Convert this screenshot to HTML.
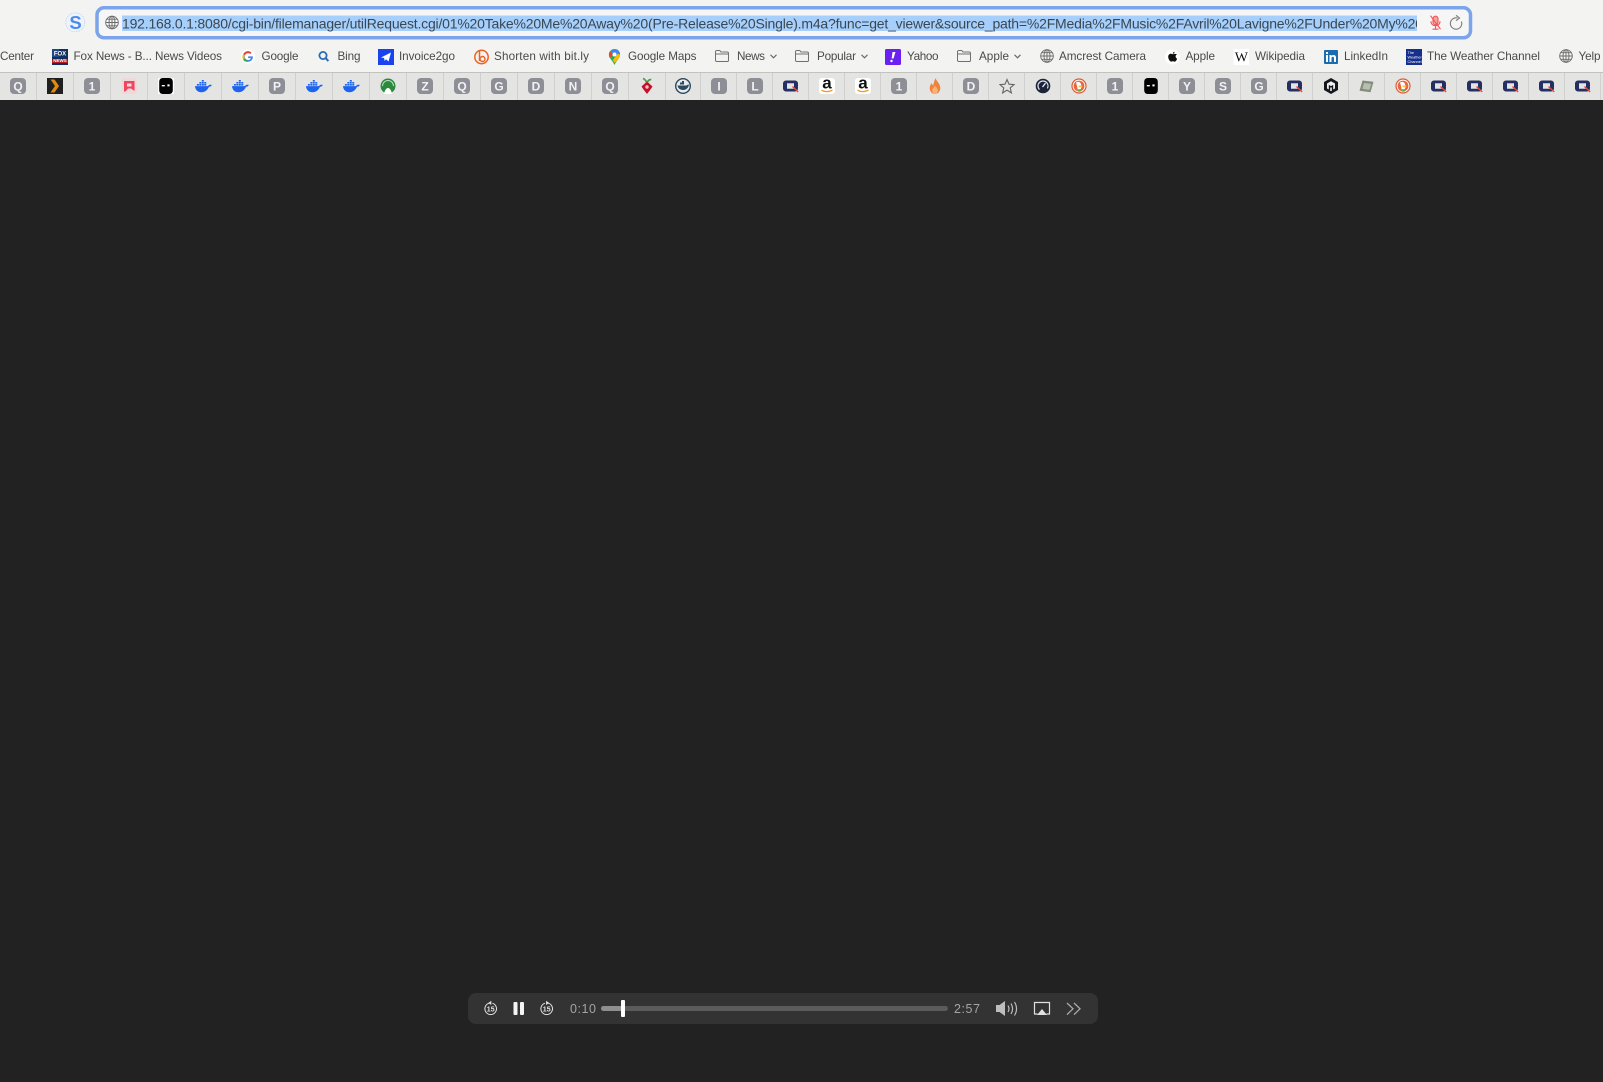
<!DOCTYPE html>
<html lang="en">
<head>
<meta charset="utf-8">
<title>Viewer</title>
<style>
html,body{margin:0;padding:0;background:#222;width:1603px;height:1082px;overflow:hidden}
svg{display:block;position:absolute;left:0;top:0}
text{font-family:"Liberation Sans",Arial,sans-serif}
.b{font-size:11.7px;fill:#4a4a4a}
.t{font-size:12px;font-weight:bold;fill:#f2f2f4;text-anchor:middle}
.r{fill:#8e8e97}
.s{fill:#d0d0cf}
</style>
</head>
<body>
<svg width="1603" height="1082" viewBox="0 0 1603 1082" xmlns="http://www.w3.org/2000/svg">
<defs>
<clipPath id="urlclip"><rect x="122" y="10" width="1295" height="26"/></clipPath>
<symbol id="docker" viewBox="0 0 18 13" overflow="visible">
<path fill="#1d63ed" d="M0 6.500H13c.6 0 1-.3 1.400-.8.600-.7 1.800-.9 3.400-.5-.5 1.400-1.600 2-3 2C13.300 10.800 10.500 13 7 13 3 13 .3 10.500 0 6.500z"/>
<path fill="#1d63ed" d="M2 4.200h2.100V6H2zM4.600 4.200h2.100V6H4.600zM7.200 4.200h2.100V6H7.200zM9.800 4.200h2.100V6H9.800zM4.600 2.100h2.100v1.700H4.600zM7.200 2.100h2.100v1.700H7.200zM9.800 2.100h2.100v1.700H9.800zM7.200 0h2.100v1.700H7.200z"/>
</symbol>
<symbol id="qnap" viewBox="0 0 15 11" overflow="visible">
<path fill="#252f62" fill-rule="evenodd" d="M3 0h9a3 3 0 0 1 3 3v5a3 3 0 0 1-3 3H3a3 3 0 0 1-3-3V3a3 3 0 0 1 3-3zM4 2.700v5.600h7V2.700z"/>
<path stroke="#e8443a" stroke-width="1.400" d="M9.500 6l5.700 5.400"/>
</symbol>
<symbol id="globe" viewBox="0 0 14 14" overflow="visible">
<g fill="none" stroke="#6a6a6a" stroke-width=".9">
<circle cx="7" cy="7" r="6.300"/><ellipse cx="7" cy="7" rx="3" ry="6.300"/>
<path d="M7 .7v12.600M.7 7h12.600M1.700 3.700h10.600M1.700 10.300h10.600"/>
</g>
</symbol>
<symbol id="folder" viewBox="0 0 14 12" overflow="visible">
<path fill="none" stroke="#707070" stroke-width="1" d="M.5 2.500V1.800A1.300 1.300 0 0 1 1.800.5h3l1.200 1.500h6.200a1.300 1.300 0 0 1 1.300 1.300v6.900a1.300 1.300 0 0 1-1.300 1.300H1.800A1.300 1.300 0 0 1 .5 10.200V2.500zM.5 4h13"/>
</symbol>
<symbol id="mask" viewBox="0 0 16 16" overflow="visible">
<path fill="#000" d="M5 0h6c2.500 0 3.800 1.500 3.800 4v8c0 2.500-1.300 4-3.800 4H5c-2.500 0-3.800-1.500-3.800-4V4C1.200 1.500 2.500 0 5 0z"/>
<rect x="3.800" y="7" width="3" height="1.400" fill="#fff"/>
<rect x="9.400" y="6.400" width="2.200" height="2" fill="#fff"/>
</symbol>
<symbol id="amz" viewBox="0 0 16 16" overflow="visible">
<rect width="16" height="16" rx="3" fill="#fff"/>
<text x="8" y="10.700" font-size="17" font-weight="bold" fill="#111" text-anchor="middle">a</text>
<path d="M2.500 12c3 2.200 7.500 2.200 11 0" fill="none" stroke="#f29a1f" stroke-width="1.300"/>
</symbol>
<symbol id="duck" viewBox="0 0 16 16" overflow="visible">
<circle cx="8" cy="8" r="7.600" fill="#de5833"/>
<circle cx="8" cy="8" r="6.400" fill="#fff"/>
<circle cx="8" cy="8" r="5.400" fill="#e5673f"/>
<path fill="#fff" d="M5 4.500c2-1.300 4.500-.6 5 1.500l.5 3.500-2 3.500H7L6 8z"/>
<path fill="#f8c13a" d="M7.500 7.500h4.200l-1 1.600-3 .3z"/>
<path fill="#5bb130" d="M6.800 11.300h3.200l-.4 2.400H7.300z"/>
</symbol>
<symbol id="rew" viewBox="0 0 14 16" overflow="visible">
<path d="M5.300 3.200A5.800 5.800 0 1 0 8.700 3.200" fill="none" stroke="#e4e4e4" stroke-width="1"/>
<path fill="#e4e4e4" d="M7.600 .8v4.200L4.500 3z"/>
</symbol>
</defs>

<rect x="0" y="0" width="1603" height="72" fill="#f3f3f2"/>
<rect x="0" y="72" width="1603" height="28" fill="#e4e4e3"/>
<rect x="0" y="72" width="1603" height="1" fill="#c2c2c1"/>
<rect x="0" y="100" width="1603" height="982" fill="#222"/>

<!-- toolbar -->
<circle cx="75.300" cy="22.300" r="9.500" fill="#eef3fb" stroke="#bcd3f5" stroke-width=".8" stroke-dasharray="1.500 1"/>
<text x="75.500" y="29" font-size="18.500" font-weight="bold" fill="#4a8bf0" text-anchor="middle">S</text>
<rect x="97" y="7.800" width="1373.500" height="30" rx="7" fill="#f6f6f6" stroke="#7ba4ea" stroke-width="3.500"/>
<use href="#globe" x="105" y="15.500" width="14" height="14"/>
<rect x="122" y="15.500" width="1295" height="15.500" fill="#a6cffb"/>
<g clip-path="url(#urlclip)">
<text x="122" y="28.300" font-size="14" fill="#3a4752" textLength="1301" lengthAdjust="spacing">192.168.0.1:8080/cgi-bin/filemanager/utilRequest.cgi/01%20Take%20Me%20Away%20(Pre-Release%20Single).m4a?func=get_viewer&amp;source_path=%2FMedia%2FMusic%2FAvril%20Lavigne%2FUnder%20My%20</text>
</g>
<!-- muted mic -->
<g fill="none" stroke="#f25353" stroke-width="1.100" transform="translate(0,-.3)">
<rect x="1433" y="16.500" width="5" height="8.500" rx="2.500" fill="#f8a3a3"/>
<path d="M1431 21.500c0 3 2 4.500 4.500 4.500s4.500-1.500 4.500-4.500M1435.500 26v3M1432.500 29.500h6M1430.500 16l10 13.500"/>
</g>
<!-- reload -->
<g transform="translate(0,-.5)">
<path d="M1457.500 18.500A5.700 5.700 0 1 0 1461.400 22" fill="none" stroke="#7a7a7a" stroke-width="1.100"/>
<path d="M1456 15.800l3.500 2.700-3.500 2.700" fill="none" stroke="#7a7a7a" stroke-width="1.100"/>
</g>

<!-- bookmark labels -->
<text class="b" x="0" y="60" textLength="34">Center</text>
<text class="b" x="73.500" y="60" textLength="148.500">Fox News - B... News Videos</text>
<text class="b" x="261.500" y="60" textLength="37">Google</text>
<text class="b" x="337.500" y="60" textLength="23">Bing</text>
<text class="b" x="399" y="60" textLength="56">Invoice2go</text>
<text class="b" x="494" y="60" textLength="95">Shorten with bit.ly</text>
<text class="b" x="628" y="60" textLength="68.500">Google Maps</text>
<text class="b" x="737" y="60" textLength="28">News</text>
<text class="b" x="817" y="60" textLength="39">Popular</text>
<text class="b" x="907" y="60" textLength="31.500">Yahoo</text>
<text class="b" x="979" y="60" textLength="30">Apple</text>
<text class="b" x="1059" y="60" textLength="87">Amcrest Camera</text>
<text class="b" x="1185.500" y="60" textLength="29.500">Apple</text>
<text class="b" x="1255" y="60" textLength="50">Wikipedia</text>
<text class="b" x="1344" y="60" textLength="44">LinkedIn</text>
<text class="b" x="1427" y="60" textLength="113">The Weather Channel</text>
<text class="b" x="1578.500" y="60" textLength="22">Yelp</text>

<!-- bookmark icons -->
<g transform="translate(0,-1.500)">
<rect x="52" y="50.500" width="16" height="16" fill="#12305f"/>
<rect x="52" y="50.500" width="7" height="8" fill="#23477f"/>
<rect x="52" y="61" width="16" height="3.500" fill="#b31d22"/>
<text x="60" y="57" font-size="6" font-weight="bold" fill="#fff" text-anchor="middle">FOX</text>
<text x="60" y="63.500" font-size="4.500" font-weight="bold" fill="#fff" text-anchor="middle">NEWS</text>

<circle cx="248" cy="58" r="7" fill="#fff"/>
<path d="M252.800 57.900h-4.700v1.700h2.700c-.3 1.200-1.300 1.900-2.700 1.900a3.400 3.400 0 1 1 2.200-6l1.300-1.300a5.200 5.200 0 1 0-3.500 9c2.800 0 4.800-1.900 4.800-4.800z" fill="#4285f4"/>
<path d="M243.300 55.500l1.500 1.100a3.400 3.400 0 0 1 5.300-1.300l1.300-1.300a5.200 5.200 0 0 0-8.100 1.500z" fill="#ea4335"/>
<path d="M244.600 60l-1.500 1.200c.9 1.600 2.700 2 4.900 2.100v-1.800a3.400 3.400 0 0 1-3.400-1.500z" fill="#34a853"/>
<path d="M243.300 55.500a5.200 5.200 0 0 0-.1 5.700l1.500-1.200a3.400 3.400 0 0 1 .1-3.400z" fill="#fbbc05"/>

<circle cx="323" cy="57" r="3.600" fill="none" stroke="#2b6cb5" stroke-width="1.800"/>
<path d="M325.600 59.600l2.800 3" stroke="#2b6cb5" stroke-width="2"/>

<rect x="378" y="50.500" width="16" height="16" fill="#1a43f0"/>
<path d="M381 59l10-5-2.500 9-2.500-2.300-1.300 1.800-.6-3z" fill="#fff"/>

<circle cx="481.500" cy="58.500" r="6.700" fill="none" stroke="#ee6123" stroke-width="1.500"/>
<path d="M479.500 52v10.500" stroke="#ee6123" stroke-width="1.500"/>
<circle cx="482.500" cy="60.500" r="2.500" fill="none" stroke="#ee6123" stroke-width="1.400"/>

<path d="M614.500 50.500a5.600 5.600 0 0 1 5.600 5.600c0 3.600-3.800 6-5.600 10.400-1.800-4.400-5.600-6.800-5.600-10.400a5.600 5.600 0 0 1 5.600-5.600z" fill="#34a853"/>
<path d="M610 53l4.500-2.500a5.600 5.600 0 0 1 5 3l-3.300 3.300z" fill="#4285f4"/>
<path d="M608.900 56.100a5.600 5.600 0 0 1 1.100-3.100l3 3-3.200 3.200c-.6-1-.9-2-.9-3.100z" fill="#ea4335"/>
<path d="M620.100 56c0 1.400-.6 2.500-1.300 3.600l-4 4.800-2-2.600 5-6.500z" fill="#fbbc05"/>
<circle cx="614.500" cy="56" r="2" fill="#fff"/>

<path d="M770.500 56.300l3 3 3-3" fill="none" stroke="#666" stroke-width="1.100"/>
<path d="M861.500 56.300l3 3 3-3" fill="none" stroke="#666" stroke-width="1.100"/>

<rect x="885" y="50.500" width="16" height="16" rx="1.500" fill="#6b1ff0"/>
<path d="M892.500 53.500h3l-2 6.500h-1.800z" fill="#fff"/>
<circle cx="891.500" cy="62.500" r="1.200" fill="#fff"/>

<path d="M1014.500 56.300l3 3 3-3" fill="none" stroke="#666" stroke-width="1.100"/>

<circle cx="1172.500" cy="58.500" r="7.500" fill="#fff"/>
<path d="M1174.800 55.300c-.7 0-1.300.5-1.900.5-.7 0-1.300-.5-2-.5-1.500 0-2.700 1.200-2.700 3 0 2.200 1.600 4.800 2.900 4.800.6 0 1-.4 1.800-.4s1.100.4 1.800.4c1 0 2-1.500 2.400-2.900-1.900-.8-2-3.600-.1-4.300-.4-.3-1.200-.6-2.200-.1z" fill="#111"/>
<path d="M1172.800 55.300c0-1 .7-1.900 1.800-2 .1 1.100-.8 2-1.800 2z" fill="#111"/>

<rect x="1233.500" y="50.500" width="15.500" height="16" fill="#fff"/>
<text x="1241.300" y="63" font-size="14" fill="#111" text-anchor="middle" style="font-family:'Liberation Serif',serif">W</text>

<rect x="1324" y="51.500" width="14" height="14" rx="1" fill="#1a6cae"/>
<rect x="1326" y="56.500" width="2" height="7" fill="#fff"/>
<rect x="1326" y="53.500" width="2" height="2" fill="#fff"/>
<path d="M1329.500 56.500h2v1c1-1.600 4.500-1.600 4.500 1.500v4.500h-2v-4c0-1.800-2.500-1.600-2.500 0v4h-2z" fill="#fff"/>

<rect x="1406" y="50.500" width="16" height="16" fill="#142f8c"/>
<text x="1407.500" y="55.500" font-size="3.800" fill="#fff">The</text>
<text x="1407.500" y="60" font-size="3.800" fill="#fff">Weather</text>
<text x="1407.500" y="64.500" font-size="3.800" fill="#fff">Channel</text>
</g>
<use href="#folder" x="715" y="50" width="14" height="12"/>
<use href="#folder" x="795" y="50" width="14" height="12"/>
<use href="#folder" x="957" y="50" width="14" height="12"/>
<use href="#globe" x="1040" y="49" width="14" height="14"/>
<use href="#globe" x="1559" y="49" width="14" height="14"/>

<!-- tab separators -->
<g class="s">
<rect x="36" y="73" width="1" height="27"/><rect x="73" y="73" width="1" height="27"/><rect x="110" y="73" width="1" height="27"/><rect x="147" y="73" width="1" height="27"/><rect x="184" y="73" width="1" height="27"/><rect x="221" y="73" width="1" height="27"/><rect x="258" y="73" width="1" height="27"/><rect x="295" y="73" width="1" height="27"/><rect x="332" y="73" width="1" height="27"/><rect x="369" y="73" width="1" height="27"/><rect x="406" y="73" width="1" height="27"/><rect x="443" y="73" width="1" height="27"/><rect x="480" y="73" width="1" height="27"/><rect x="517" y="73" width="1" height="27"/><rect x="554" y="73" width="1" height="27"/><rect x="591" y="73" width="1" height="27"/><rect x="628" y="73" width="1" height="27"/><rect x="665" y="73" width="1" height="27"/>
<rect x="700" y="73" width="1" height="27"/><rect x="736" y="73" width="1" height="27"/><rect x="772" y="73" width="1" height="27"/><rect x="808" y="73" width="1" height="27"/><rect x="844" y="73" width="1" height="27"/><rect x="880" y="73" width="1" height="27"/><rect x="916" y="73" width="1" height="27"/><rect x="952" y="73" width="1" height="27"/><rect x="988" y="73" width="1" height="27"/><rect x="1024" y="73" width="1" height="27"/><rect x="1060" y="73" width="1" height="27"/><rect x="1096" y="73" width="1" height="27"/><rect x="1132" y="73" width="1" height="27"/><rect x="1168" y="73" width="1" height="27"/><rect x="1204" y="73" width="1" height="27"/><rect x="1240" y="73" width="1" height="27"/><rect x="1276" y="73" width="1" height="27"/><rect x="1312" y="73" width="1" height="27"/><rect x="1348" y="73" width="1" height="27"/><rect x="1384" y="73" width="1" height="27"/><rect x="1420" y="73" width="1" height="27"/><rect x="1456" y="73" width="1" height="27"/><rect x="1492" y="73" width="1" height="27"/><rect x="1528" y="73" width="1" height="27"/><rect x="1564" y="73" width="1" height="27"/><rect x="1600" y="73" width="1" height="27"/>
</g>

<!-- letter tiles -->
<rect class="r" x="10" y="78" width="16" height="16" rx="4"/><text class="t" x="18" y="90.300">Q</text>
<rect class="r" x="84" y="78" width="16" height="16" rx="4"/><text class="t" x="92" y="90.300">1</text>
<rect class="r" x="269" y="78" width="16" height="16" rx="4"/><text class="t" x="277" y="90.300">P</text>
<rect class="r" x="417" y="78" width="16" height="16" rx="4"/><text class="t" x="425" y="90.300">Z</text>
<rect class="r" x="454" y="78" width="16" height="16" rx="4"/><text class="t" x="462" y="90.300">Q</text>
<rect class="r" x="491" y="78" width="16" height="16" rx="4"/><text class="t" x="499" y="90.300">G</text>
<rect class="r" x="528" y="78" width="16" height="16" rx="4"/><text class="t" x="536" y="90.300">D</text>
<rect class="r" x="565" y="78" width="16" height="16" rx="4"/><text class="t" x="573" y="90.300">N</text>
<rect class="r" x="602" y="78" width="16" height="16" rx="4"/><text class="t" x="610" y="90.300">Q</text>
<rect class="r" x="711" y="78" width="16" height="16" rx="4"/><text class="t" x="719" y="90.300">I</text>
<rect class="r" x="747" y="78" width="16" height="16" rx="4"/><text class="t" x="755" y="90.300">L</text>
<rect class="r" x="891" y="78" width="16" height="16" rx="4"/><text class="t" x="899" y="90.300">1</text>
<rect class="r" x="963" y="78" width="16" height="16" rx="4"/><text class="t" x="971" y="90.300">D</text>
<rect class="r" x="1107" y="78" width="16" height="16" rx="4"/><text class="t" x="1115" y="90.300">1</text>
<rect class="r" x="1179" y="78" width="16" height="16" rx="4"/><text class="t" x="1187" y="90.300">Y</text>
<rect class="r" x="1215" y="78" width="16" height="16" rx="4"/><text class="t" x="1223" y="90.300">S</text>
<rect class="r" x="1251" y="78" width="16" height="16" rx="4"/><text class="t" x="1259" y="90.300">G</text>

<!-- plex -->
<rect x="47" y="78" width="16" height="16" fill="#1f1f1f"/>
<path d="M50.500 79.500h4l4.500 6.500-4.500 6.500h-4l4.500-6.500z" fill="#e08a10"/>
<!-- pink tile -->
<rect x="121.500" y="78" width="15.500" height="16" rx="3" fill="#f0d8d8"/>
<path d="M124 81h10.500v10l-3.500-2.500h-3l-2.500 3H124z" fill="#f0455f"/>
<rect x="127" y="83.500" width="4.500" height="3" fill="#f5d9e0"/>
<!-- mask tiles -->
<rect x="158" y="78" width="16" height="16" fill="#fff"/>
<use href="#mask" x="158" y="78" width="16" height="16"/>
<use href="#mask" x="1143" y="78" width="16" height="16"/>
<!-- docker -->
<use href="#docker" x="195" y="80" width="17" height="12.300"/>
<use href="#docker" x="232" y="80" width="17" height="12.300"/>
<use href="#docker" x="306" y="80" width="17" height="12.300"/>
<use href="#docker" x="343" y="80" width="17" height="12.300"/>
<!-- green -->
<circle cx="388" cy="86" r="7.500" fill="#2b8a3e"/>
<path d="M382.500 86a5.500 5.500 0 0 1 11 0" fill="none" stroke="#bfe0c4" stroke-width="1"/>
<path d="M384 94c.5-3 2-6 4-6s3.500 3 4 6z" fill="#fff"/>
<!-- pihole -->
<path d="M646.500 82c-1-2-2-3-3.500-3.500M647.500 82c.7-1.700 2-2.500 3.700-2.500" fill="none" stroke="#3ea33e" stroke-width="1.700"/>
<path d="M647 81.500l5.500 5-2 3-3.500 4.500-3.500-4.500-2-3z" fill="#c5102c"/>
<circle cx="647" cy="87" r="1.700" fill="#f3c0c0"/>
<!-- dark docker circle -->
<circle cx="683" cy="86" r="7.300" fill="#e8eaec" stroke="#2c4a5e" stroke-width="1.400"/>
<path d="M677.500 85.500h9c1-.8 1.500-1 2.500-.8-.6 3.300-3 5.300-6 5.300-3 0-5-1.800-5.500-4.500z" fill="#2c4a5e"/>
<path d="M680 84.500v-2h2v-1.500h2v3.500z" fill="#2c4a5e"/>
<!-- qnap -->
<use href="#qnap" x="783" y="80.500" width="15" height="11"/>
<use href="#qnap" x="1287" y="80.500" width="15" height="11"/>
<use href="#qnap" x="1431" y="80.500" width="15" height="11"/>
<use href="#qnap" x="1467" y="80.500" width="15" height="11"/>
<use href="#qnap" x="1503" y="80.500" width="15" height="11"/>
<use href="#qnap" x="1539" y="80.500" width="15" height="11"/>
<use href="#qnap" x="1575" y="80.500" width="15" height="11"/>
<!-- amazon -->
<use href="#amz" x="819" y="78" width="16" height="16"/>
<use href="#amz" x="855" y="78" width="16" height="16"/>
<!-- flame -->
<path d="M935.500 78c.7 3 4.800 5.500 4.800 10 0 3.500-2.400 6-5.300 6s-5.300-2.500-5.300-6c0-2.200 1.200-3.700 2-5 .3 1.300.7 2 1.500 2.500.5-2.500 1.300-5 2.300-7.500z" fill="#f0833a"/>
<path d="M935 85.500c.8 1.700 2.800 2.700 2.800 5 0 2-1.300 3.500-2.800 3.500s-2.800-1.500-2.800-3.500c0-2 2.200-3 2.800-5z" fill="#f8b27a"/>
<!-- star -->
<path d="M1007 79.500l2 4.700 5 .4-3.800 3.300 1.200 5-4.400-2.700-4.400 2.700 1.200-5-3.800-3.300 5-.4z" fill="none" stroke="#666" stroke-width="1.100"/>
<!-- gauge -->
<circle cx="1043" cy="86" r="7.300" fill="#1c2438"/>
<circle cx="1043" cy="86" r="5" fill="none" stroke="#dfe4ee" stroke-width="1.200" stroke-dasharray="22 10" transform="rotate(135 1043 86)"/>
<path d="M1042.500 87l3-3.800" stroke="#dfe4ee" stroke-width="1.400"/>
<!-- duck -->
<use href="#duck" x="1071" y="78" width="16" height="16"/>
<use href="#duck" x="1395" y="78" width="16" height="16"/>
<!-- cube -->
<path d="M1331 78l7 4v8l-7 4-7-4v-8z" fill="#14181d"/>
<path d="M1327 83.500l4-2.200 4 2.200v5l-1.800 1v-4.600l-2.200 1.200-2.200-1.200v4.600l-1.800-1zM1330.200 87.500h1.600v3.500h-1.600z" fill="#f0f0f0"/>
<!-- chip -->
<path d="M1362.500 80.500l11 1.300-3 10.500-11-1.500z" fill="#848c7c"/>
<path d="M1364 83l7.200.9-1.800 6-7-1z" fill="#b9bfb0"/>

<!-- player -->
<rect x="468" y="993" width="630" height="31" rx="8" fill="#333"/>
<use href="#rew" x="483.700" y="1000" width="14" height="16"/>
<text x="490.700" y="1011.500" font-size="7" font-weight="bold" fill="#e4e4e4" text-anchor="middle">15</text>
<rect x="513.500" y="1002" width="4" height="13" rx="1" fill="#f5f5f5"/>
<rect x="520" y="1002" width="4" height="13" rx="1" fill="#f5f5f5"/>
<use href="#rew" x="-553.700" y="1000" width="14" height="16" transform="scale(-1 1)"/>
<text x="546.700" y="1011.500" font-size="7" font-weight="bold" fill="#e4e4e4" text-anchor="middle">15</text>
<text x="570" y="1012.800" font-size="12.500" fill="#a4a4a4" textLength="26">0:10</text>
<rect x="601" y="1006" width="347" height="5" rx="2.500" fill="#5b5b5b"/>
<rect x="601" y="1006" width="22" height="5" rx="2.500" fill="#8f8f8f"/>
<rect x="621" y="1000" width="4" height="17" rx="1" fill="#fff"/>
<text x="954" y="1012.800" font-size="12.500" fill="#a4a4a4" textLength="26">2:57</text>
<path d="M996 1005h3.500l5.500-4v15l-5.500-4H996z" fill="#bdbdbd"/>
<path d="M1008 1005.500c1.200 2 1.200 4.500 0 6.500M1011 1003.500c2 3.300 2 7.200 0 10.500M1014.500 1002c2.600 4.300 2.600 9.200 0 13.500" fill="none" stroke="#bdbdbd" stroke-width="1.200"/>
<path d="M1037.500 1014h-3v-11.500h15v11.500h-3" fill="none" stroke="#e0e0e0" stroke-width="1.200"/>
<path d="M1042 1009l5 6h-10z" fill="#e0e0e0"/>
<path d="M1067 1003l6 5.800-6 5.800M1074 1003l6 5.800-6 5.800" fill="none" stroke="#a8a8a8" stroke-width="1.300"/>
</svg>
</body>
</html>
